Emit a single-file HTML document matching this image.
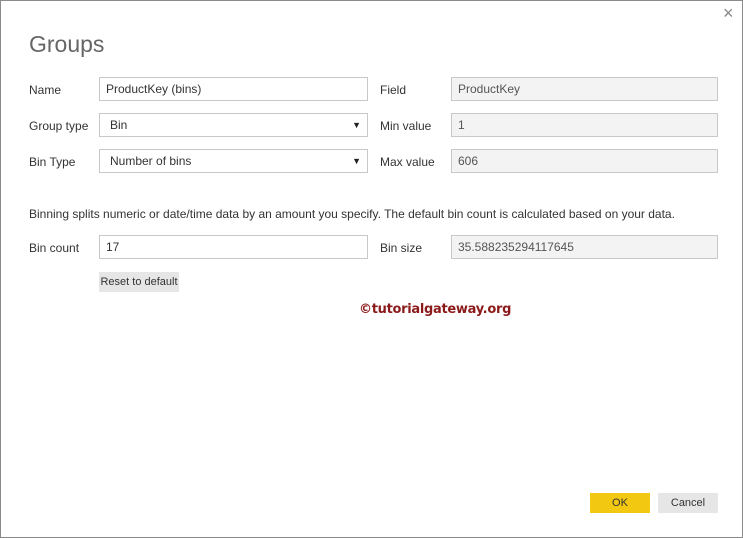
<!DOCTYPE html>
<html><head><style>
body{margin:0;width:743px;height:538px;background:#fff;font-family:"Liberation Sans",sans-serif;position:relative;overflow:hidden}
.frame{position:absolute;left:0;top:0;width:741px;height:536px;border:1px solid #8a8a8a}
.t{position:absolute;font-size:12px;color:#333}
.in{position:absolute;box-sizing:border-box;height:24px;border:1px solid #c8c8c8;background:#fff;font-size:12px;color:#333;padding:0 0 0 6px;line-height:22px}
.ro{background:#f3f3f3;color:#555}
.arr{position:absolute;right:6px;top:0;font-size:9px;color:#222}
</style></head><body>
<div class="frame"></div>
<div style="position:absolute;left:723px;top:3px;font-size:18px;color:#888">×</div>
<div class="t" style="left:29px;top:31px;font-size:23px;color:#666">Groups</div>
<div class="t" style="left:29px;top:83px">Name</div>
<div class="in" style="left:99px;top:77px;width:269px">ProductKey (bins)</div>
<div class="t" style="left:29px;top:119px">Group type</div>
<div class="in" style="left:99px;top:113px;width:269px;padding-left:10px">Bin<span class="arr">▼</span></div>
<div class="t" style="left:29px;top:155px">Bin Type</div>
<div class="in" style="left:99px;top:149px;width:269px;padding-left:10px">Number of bins<span class="arr">▼</span></div>
<div class="t" style="left:380px;top:83px">Field</div>
<div class="in ro" style="left:451px;top:77px;width:267px">ProductKey</div>
<div class="t" style="left:380px;top:119px">Min value</div>
<div class="in ro" style="left:451px;top:113px;width:267px">1</div>
<div class="t" style="left:380px;top:155px">Max value</div>
<div class="in ro" style="left:451px;top:149px;width:267px">606</div>
<div class="t" style="left:29px;top:207px">Binning splits numeric or date/time data by an amount you specify. The default bin count is calculated based on your data.</div>
<div class="t" style="left:29px;top:241px">Bin count</div>
<div class="in" style="left:99px;top:235px;width:269px">17</div>
<div class="t" style="left:380px;top:241px">Bin size</div>
<div class="in ro" style="left:451px;top:235px;width:267px">35.588235294117645</div>
<div style="position:absolute;left:99px;top:272px;width:80px;height:20px;background:#e6e6e6;font-size:11px;color:#333;text-align:center;line-height:20px">Reset to default</div>
<div style="position:absolute;left:359px;top:302px;font-size:13px;font-weight:bold;color:#8b1a1a;font-family:'DejaVu Sans',sans-serif;letter-spacing:-0.3px">©tutorialgateway.org</div>
<div style="position:absolute;left:590px;top:493px;width:60px;height:20px;background:#f2c811;font-size:11px;color:#333;text-align:center;line-height:20px">OK</div>
<div style="position:absolute;left:658px;top:493px;width:60px;height:20px;background:#e6e6e6;font-size:11px;color:#333;text-align:center;line-height:20px">Cancel</div>
</body></html>
